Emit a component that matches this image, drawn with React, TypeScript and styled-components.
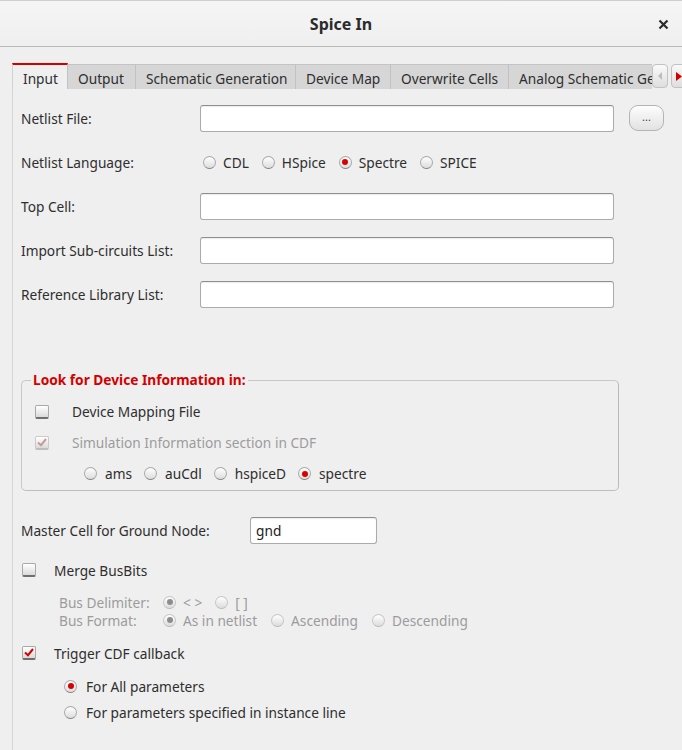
import React from 'react'
import styled, { createGlobalStyle } from 'styled-components';

const GlobalStyle = createGlobalStyle`
  html, body { margin: 0; padding: 0; background: #efefef; }
  body { font-family: "Noto Sans", "Open Sans", sans-serif; font-size: 13.7px; color: #2e2e2e; }
`;

const Window = styled.div`
  width: 682px;
  height: 750px;
  overflow: hidden;
  background: #efefef;
  display: flex;
  flex-direction: column;
`;

const TitleBar = styled.div`
  height: 47px;
  flex: none;
  display: flex;
  align-items: center;
  justify-content: center;
  position: relative;
  background: linear-gradient(#f5f5f5, #efefef);
  border-top: 1px solid #cfcfcf;
  border-bottom: 1px solid #b9b9b9;
  box-sizing: border-box;
  h1 {
    margin: 0;
    font-size: 16px;
    font-weight: 700;
    color: #2b2b2b;
  }
`;

const CloseBtn = styled.button`
  position: absolute;
  right: 12px;
  top: 18px;
  border: none;
  background: transparent;
  padding: 0;
  width: 12px;
  height: 12px;
  display: flex;
`;

const Body = styled.div`
  flex: 1;
  padding: 16px 0 0 12px;
  overflow: hidden;
  display: flex;
  flex-direction: column;
`;

const TabBar = styled.div`
  display: flex;
  height: 26px;
  flex: none;
  width: 680px;
`;

const TabStrip = styled.div`
  width: 640px;
  flex: none;
  display: flex;
  overflow: hidden;
`;

const Tab = styled.div<{ $active?: boolean; $w?: number }>`
  flex: none;
  width: ${p => (p.$w ? `${p.$w}px` : 'auto')};
  display: flex;
  align-items: center;
  padding: 3px 0 0 10px;
  white-space: nowrap;
  overflow: hidden;
  box-sizing: border-box;
  background: ${p => (p.$active ? '#efefef' : '#d6d6d6')};
  border-top: ${p => (p.$active ? '2px solid #d40000' : '1px solid #c4c4c4')};
  margin-top: ${p => (p.$active ? '0' : '1px')};
  border-right: 1px solid #c2c2c2;
  border-left: ${p => (p.$active ? '1px solid #d2d2d2' : 'none')};
  color: #2e2e2e;
`;

const ScrollBtn = styled.div<{ $gap?: number }>`
  width: 16px;
  height: 24px;
  margin: 1px 0 0 ${p => p.$gap ?? 0}px;
  flex: none;
  border: 1px solid #c2c2c2;
  border-radius: 4px;
  background: linear-gradient(#fafafa, #dedede);
  display: flex;
  align-items: center;
  justify-content: center;
  box-sizing: border-box;
`;

const Panel = styled.div`
  flex: 1;
  border-left: 1px solid #d6d6d6;
  padding: 7px 0 0 8px;
  display: flex;
  flex-direction: column;
`;

const FormRow = styled.div<{ $h?: number; $labelW?: number }>`
  height: ${p => p.$h ?? 44}px;
  display: flex;
  align-items: center;
  flex: none;
  > label:first-child {
    width: ${p => p.$labelW ?? 179}px;
    flex: none;
  }
`;

const TextInput = styled.input<{ $w?: number }>`
  width: ${p => p.$w ?? 414}px;
  height: 27px;
  box-sizing: border-box;
  border: 1px solid #ababab;
  border-top-color: #8f8f8f;
  border-radius: 3px;
  background: #fff;
  box-shadow: inset 0 1px 1px rgba(0, 0, 0, 0.08);
  font: inherit;
  color: #222;
  padding: 0 5px;
  outline: none;
`;

const DotsButton = styled.button`
  margin-left: 15px;
  width: 35px;
  height: 26px;
  border: 1px solid #b4b4b4;
  border-radius: 9px;
  background: linear-gradient(#fdfdfd, #e2e2e2);
  font: inherit;
  font-size: 11px;
  color: #444;
  padding: 0 0 4px;
`;

const Options = styled.div<{ $gap?: number; $indent?: number }>`
  display: flex;
  align-items: center;
  gap: ${p => p.$gap ?? 12}px;
  padding-left: ${p => p.$indent ?? 0}px;
`;

const Choice = styled.label<{ $disabled?: boolean; $gap?: number }>`
  display: flex;
  align-items: center;
  gap: ${p => p.$gap ?? 7}px;
  white-space: nowrap;
  color: ${p => (p.$disabled ? '#9c9c9c' : '#2e2e2e')};
`;

const RadioDot = styled.span<{ $on?: boolean; $disabled?: boolean }>`
  width: 13px;
  height: 13px;
  box-sizing: border-box;
  border-radius: 50%;
  border: 1px solid ${p => (p.$disabled ? '#c6c6c6' : '#a9a9a9')};
  border-bottom-color: ${p => (p.$disabled ? '#b8b8b8' : '#7f7f7f')};
  background: linear-gradient(#ffffff, #dcdcdc);
  display: flex;
  align-items: center;
  justify-content: center;
  flex: none;
  &::after {
    content: '';
    display: ${p => (p.$on ? 'block' : 'none')};
    width: 6px;
    height: 6px;
    border-radius: 50%;
    background: ${p => (p.$disabled ? '#8d8d8d' : '#d80000')};
  }
`;

const Box = styled.span<{ $disabled?: boolean }>`
  width: 14px;
  height: 14px;
  box-sizing: border-box;
  border: 1px solid ${p => (p.$disabled ? '#cacaca' : '#a9a9a9')};
  border-bottom: 2px solid ${p => (p.$disabled ? '#bdbdbd' : '#6f6f6f')};
  border-radius: 2px;
  background: linear-gradient(#ffffff, #dadada);
  display: flex;
  align-items: center;
  justify-content: center;
  flex: none;
`;

const CheckRow = styled.div<{ $h: number; $indent: number; $gap: number; $disabled?: boolean }>`
  height: ${p => p.$h}px;
  flex: none;
  display: flex;
  align-items: center;
  padding-left: ${p => p.$indent}px;
  gap: ${p => p.$gap}px;
  color: ${p => (p.$disabled ? '#9c9c9c' : '#2e2e2e')};
`;

const Group = styled.fieldset`
  margin: 55px 0 0 0;
  width: 598px;
  box-sizing: border-box;
  border: 1px solid #c8c8c8;
  border-right-color: #b9b9b9;
  border-bottom-color: #bdbdbd;
  border-radius: 5px;
  padding: 7px 0 1px 0;
  display: flex;
  flex-direction: column;
  legend {
    margin-left: 9px;
    padding: 0 2px;
    color: #d40000;
    font-weight: 700;
    line-height: 18px;
  }
`;

const BusRow = styled.div`
  height: 18px;
  display: flex;
  align-items: center;
  padding-left: 38px;
  color: #9c9c9c;
  > span:first-child {
    width: 104px;
    flex: none;
  }
`;

const SubRadio = styled.div<{ $h: number }>`
  height: ${p => p.$h}px;
  flex: none;
  display: flex;
  align-items: center;
  padding-left: 43px;
`;

const Radio = ({ label, on, disabled, gap }: { label: string; on?: boolean; disabled?: boolean; gap?: number }) => (
  <Choice $disabled={disabled} $gap={gap}>
    <RadioDot $on={on} $disabled={disabled} />
    {label}
  </Choice>
);

const Check = ({ checked, disabled }: { checked?: boolean; disabled?: boolean }) => (
  <Box $disabled={disabled}>
    {checked && (
      <svg width="10" height="9" viewBox="0 0 10 9">
        <path d="M1 4.5 L4 7.2 L9 1" fill="none" stroke={disabled ? '#c89a9a' : '#d40000'} strokeWidth="2" />
      </svg>
    )}
  </Box>
);

export default function App() {
  return (
    <Window>
      <GlobalStyle />
      <TitleBar>
        <h1>Spice In</h1>
        <CloseBtn aria-label="close">
          <svg width="11" height="11" viewBox="0 0 11 11">
            <path d="M1.5 1.5 L9.5 9.5 M9.5 1.5 L1.5 9.5" stroke="#2b2b2b" strokeWidth="2.2" />
          </svg>
        </CloseBtn>
      </TitleBar>
      <Body>
        <TabBar>
          <TabStrip>
            <Tab $active $w={56}>Input</Tab>
            <Tab $w={68}>Output</Tab>
            <Tab $w={160}>Schematic Generation</Tab>
            <Tab $w={95}>Device Map</Tab>
            <Tab $w={118}>Overwrite Cells</Tab>
            <Tab>Analog Schematic Generation</Tab>
          </TabStrip>
          <ScrollBtn>
            <svg width="6" height="8" viewBox="0 0 6 8">
              <path d="M5 0 L1 4 L5 8 Z" fill="#bdbdbd" />
            </svg>
          </ScrollBtn>
          <ScrollBtn $gap={3}>
            <svg width="6" height="9" viewBox="0 0 6 9">
              <path d="M0 0 L6 4.5 L0 9 Z" fill="#d40000" />
            </svg>
          </ScrollBtn>
        </TabBar>
        <Panel>
          <FormRow>
            <label>Netlist File:</label>
            <TextInput />
            <DotsButton>...</DotsButton>
          </FormRow>
          <FormRow>
            <label>Netlist Language:</label>
            <Options $gap={13} $indent={3}>
              <Radio label="CDL" />
              <Radio label="HSpice" />
              <Radio label="Spectre" on />
              <Radio label="SPICE" />
            </Options>
          </FormRow>
          <FormRow>
            <label>Top Cell:</label>
            <TextInput />
          </FormRow>
          <FormRow>
            <label>Import Sub-circuits List:</label>
            <TextInput />
          </FormRow>
          <FormRow>
            <label>Reference Library List:</label>
            <TextInput />
          </FormRow>

          <Group>
            <legend>Look for Device Information in:</legend>
            <CheckRow $h={31} $indent={13} $gap={23}>
              <Check />
              Device Mapping File
            </CheckRow>
            <CheckRow $h={31} $indent={13} $gap={23} $disabled>
              <Check checked disabled />
              Simulation Information section in CDF
            </CheckRow>
            <CheckRow $h={31} $indent={62} $gap={0}>
              <Options>
                <Radio label="ams" gap={8} />
                <Radio label="auCdl" gap={8} />
                <Radio label="hspiceD" gap={8} />
                <Radio label="spectre" on gap={8} />
              </Options>
            </CheckRow>
          </Group>

          <FormRow $h={40} $labelW={229} style={{ marginTop: 19 }}>
            <label>Master Cell for Ground Node:</label>
            <TextInput $w={127} defaultValue="gnd" />
          </FormRow>
          <CheckRow $h={40} $indent={1} $gap={18}>
            <Check />
            Merge BusBits
          </CheckRow>
          <BusRow style={{ marginTop: 3 }}>
            <span>Bus Delimiter:</span>
            <Options $gap={13}>
              <Radio label="< >" on disabled />
              <Radio label="[ ]" disabled />
            </Options>
          </BusRow>
          <BusRow>
            <span>Bus Format:</span>
            <Options $gap={14}>
              <Radio label="As in netlist" on disabled />
              <Radio label="Ascending" disabled />
              <Radio label="Descending" disabled />
            </Options>
          </BusRow>
          <CheckRow $h={40} $indent={1} $gap={18} style={{ marginTop: 4 }}>
            <Check checked />
            Trigger CDF callback
          </CheckRow>
          <SubRadio $h={26}>
            <Radio label="For All parameters" on gap={9} />
          </SubRadio>
          <SubRadio $h={27}>
            <Radio label="For parameters specified in instance line" gap={9} />
          </SubRadio>
        </Panel>
      </Body>
    </Window>
  );
}
